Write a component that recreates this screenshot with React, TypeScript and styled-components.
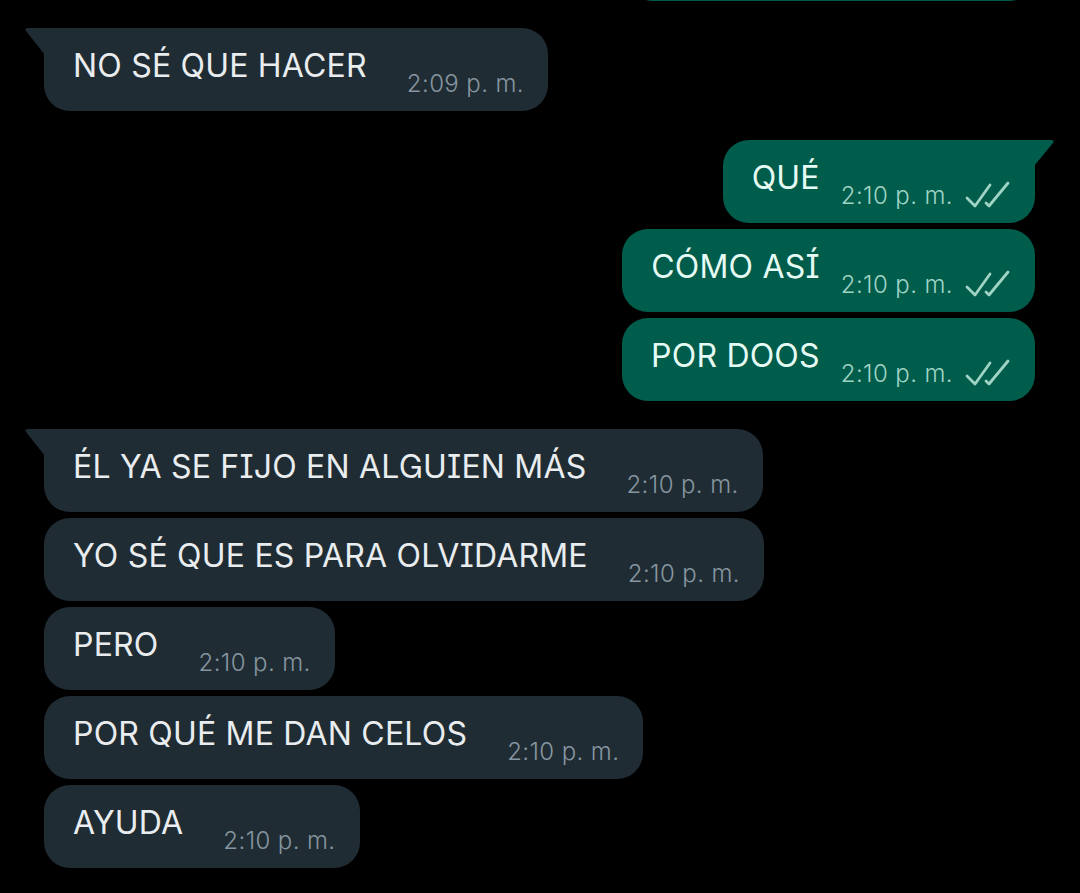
import React from "react";
import styled, { createGlobalStyle } from "styled-components";

const Global = createGlobalStyle`
  html, body { margin: 0; padding: 0; background: #000; overflow: hidden; }
  body { width: 1080px; height: 893px; font-family: Inter, Roboto, sans-serif; }
`;

const Chat = styled.div`
  display: flex;
  flex-direction: column;
  padding: 0 45px 0 44px;
  width: 1080px;
  height: 893px;
  box-sizing: border-box;
  background: #000;
`;

const Row = styled.div<{ $out?: boolean; $gapTop: number }>`
  display: flex;
  justify-content: ${(p) => (p.$out ? "flex-end" : "flex-start")};
  margin-top: ${(p) => p.$gapTop}px;
`;

const Bubble = styled.div<{ $out?: boolean; $tail?: boolean; $width?: number }>`
  position: relative;
  display: flex;
  align-items: flex-start;
  box-sizing: border-box;
  height: 83px;
  padding: 0 ${(p) => (p.$out ? 25 : 24)}px 0 ${(p) => (p.$out ? 29 : 29)}px;
  border-radius: 26px;
  ${(p) => (p.$tail ? (p.$out ? "border-top-right-radius: 0;" : "border-top-left-radius: 0;") : "")}
  background: ${(p) => (p.$out ? "#005c4b" : "#202c33")};
  ${(p) => (p.$width ? `width: ${p.$width}px;` : "")}
`;

const Text = styled.span<{ $out?: boolean }>`
  margin-top: 18px;
  font-size: 32px;
  line-height: 40px;
  letter-spacing: 0.2px;
  white-space: nowrap;
  font-feature-settings: "ss02" 1, "cv08" 1, "cv10" 1;
  color: ${(p) => (p.$out ? "#e6fbf4" : "#e9edef")};
`;

const Meta = styled.span<{ $out?: boolean }>`
  display: flex;
  align-items: center;
  gap: 11px;
  margin-top: 42px;
  margin-left: ${(p) => (p.$out ? 21 : 40)}px;
  font-size: 24px;
  line-height: 28px;
  font-weight: 300;
  letter-spacing: 0.4px;
  white-space: nowrap;
  color: ${(p) => (p.$out ? "#9fd3c4" : "#8696a0")};
`;

const Tail = styled.svg<{ $out?: boolean }>`
  position: absolute;
  top: 0;
  ${(p) => (p.$out ? "right: -20px;" : "left: -20px;")}
  width: 21px;
  height: 30px;
`;

const Checks = () => (
  <svg width="46" height="30" viewBox="0 0 46 30" style={{ marginTop: -2 }}>
    <g fill="none" stroke="#9fd3c4" strokeWidth="2.8" strokeLinecap="round" strokeLinejoin="round">
      <path d="M3 18 L11 26 L26 5" />
      <path d="M22 23 L25 26 L44 3" />
    </g>
  </svg>
);

type Msg = { text: string; time: string; out?: boolean; tail?: boolean; gap: number };

const msgs: Msg[] = [
  { text: "NO SÉ QUE HACER", time: "2:09 p. m.", tail: true, gap: 27 },
  { text: "QUÉ", time: "2:10 p. m.", out: true, tail: true, gap: 29 },
  { text: "CÓMO ASÍ", time: "2:10 p. m.", out: true, gap: 6 },
  { text: "POR DOOS", time: "2:10 p. m.", out: true, gap: 6 },
  { text: "ÉL YA SE FIJO EN ALGUIEN MÁS", time: "2:10 p. m.", tail: true, gap: 28 },
  { text: "YO SÉ QUE ES PARA OLVIDARME", time: "2:10 p. m.", gap: 6 },
  { text: "PERO", time: "2:10 p. m.", gap: 6 },
  { text: "POR QUÉ ME DAN CELOS", time: "2:10 p. m.", gap: 6 },
  { text: "AYUDA", time: "2:10 p. m.", gap: 6 },
];

export default function App() {
  return (
    <>
      <Global />
      <Chat>
        <Row $out $gapTop={-82}>
          <Bubble $out $width={408} />
        </Row>
        {msgs.map((m, i) => (
          <Row key={i} $out={m.out} $gapTop={m.gap}>
            <Bubble $out={m.out} $tail={m.tail}>
              {m.tail && (
                <Tail $out={m.out} viewBox="0 0 21 30">
                  {m.out ? (
                    <path d="M0 0 L17 0 Q21 0 19 3 L0 26 Z" fill="#005c4b" />
                  ) : (
                    <path d="M21 0 L4 0 Q0 0 2 3 L21 27 Z" fill="#202c33" />
                  )}
                </Tail>
              )}
              <Text $out={m.out}>{m.text}</Text>
              <Meta $out={m.out}>
                {m.time}
                {m.out && <Checks />}
              </Meta>
            </Bubble>
          </Row>
        ))}
      </Chat>
    </>
  );
}
